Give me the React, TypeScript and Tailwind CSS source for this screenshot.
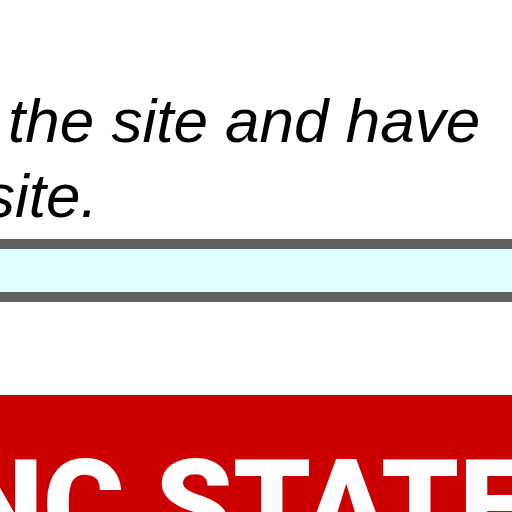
import React from 'react';

const App: React.FC = () => {
  return (
    <div className="w-[512px] h-[512px] overflow-hidden bg-white">
      {/* Intro text, cropped on the left */}
      <div
        className="pt-[83px] italic text-black text-[62px] leading-[75px] whitespace-nowrap"
        style={{ fontFamily: '"Liberation Sans", Arial, sans-serif' }}
      >
        <div className="pl-[8px]">the site and have</div>
        <div className="ml-[-16px]">site.</div>
      </div>

      {/* Notice bar */}
      <div className="mt-[6px] h-[63px] border-y-[10px] border-[#616260] bg-[#e0ffff]" />

      {/* Brand banner */}
      <div className="mt-[93px] h-[200px] bg-[#cc0000] pt-[49px] overflow-hidden">
        <div
          className="ml-[-44px] text-white font-black text-[124px] leading-none whitespace-nowrap"
          style={{ fontFamily: 'Roboto, "Liberation Sans", sans-serif' }}
        >
          NC STATE
        </div>
      </div>
    </div>
  );
};

export default App;
